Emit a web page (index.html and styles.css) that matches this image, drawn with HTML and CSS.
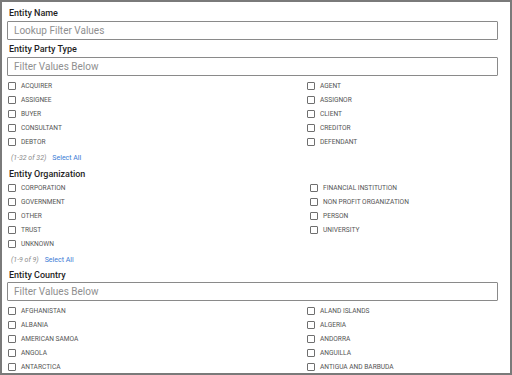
FILE: index.html
```html
<!DOCTYPE html>
<html>
<head>
<meta charset="utf-8">
<link rel="stylesheet" href="styles.css">
</head>
<body>
<div class="panel">
  <div class="label first">Entity Name</div>
  <div class="input">Lookup Filter Values</div>

  <div class="label">Entity Party Type</div>
  <div class="input">Filter Values Below</div>
  <div class="grid grid-a">
    <label class="opt"><span class="box"></span>ACQUIRER</label>
    <label class="opt"><span class="box"></span>AGENT</label>
    <label class="opt"><span class="box"></span>ASSIGNEE</label>
    <label class="opt"><span class="box"></span>ASSIGNOR</label>
    <label class="opt"><span class="box"></span>BUYER</label>
    <label class="opt"><span class="box"></span>CLIENT</label>
    <label class="opt"><span class="box"></span>CONSULTANT</label>
    <label class="opt"><span class="box"></span>CREDITOR</label>
    <label class="opt"><span class="box"></span>DEBTOR</label>
    <label class="opt"><span class="box"></span>DEFENDANT</label>
  </div>
  <div class="foot"><span class="count">(1-32 of 32)</span><span class="link">Select All</span></div>

  <div class="label">Entity Organization</div>
  <div class="grid grid-b">
    <div class="col">
      <label class="opt"><span class="box"></span>CORPORATION</label>
      <label class="opt"><span class="box"></span>GOVERNMENT</label>
      <label class="opt"><span class="box"></span>OTHER</label>
      <label class="opt"><span class="box"></span>TRUST</label>
      <label class="opt"><span class="box"></span>UNKNOWN</label>
    </div>
    <div class="col">
      <label class="opt"><span class="box"></span>FINANCIAL INSTITUTION</label>
      <label class="opt"><span class="box"></span>NON PROFIT ORGANIZATION</label>
      <label class="opt"><span class="box"></span>PERSON</label>
      <label class="opt"><span class="box"></span>UNIVERSITY</label>
    </div>
  </div>
  <div class="foot"><span class="count">(1-9 of 9)</span><span class="link">Select All</span></div>

  <div class="label tight">Entity Country</div>
  <div class="input">Filter Values Below</div>
  <div class="grid grid-a">
    <label class="opt"><span class="box"></span>AFGHANISTAN</label>
    <label class="opt"><span class="box"></span>ALAND ISLANDS</label>
    <label class="opt"><span class="box"></span>ALBANIA</label>
    <label class="opt"><span class="box"></span>ALGERIA</label>
    <label class="opt"><span class="box"></span>AMERICAN SAMOA</label>
    <label class="opt"><span class="box"></span>ANDORRA</label>
    <label class="opt"><span class="box"></span>ANGOLA</label>
    <label class="opt"><span class="box"></span>ANGUILLA</label>
    <label class="opt"><span class="box"></span>ANTARCTICA</label>
    <label class="opt"><span class="box"></span>ANTIGUA AND BARBUDA</label>
  </div>
</div>
</body>
</html>
```
FILE: styles.css
```css
html, body {
  margin: 0;
  padding: 0;
  background: #ffffff;
}
body {
  font-family: Roboto, "Liberation Sans", sans-serif;
  color: #222;
}
.panel {
  width: 512px;
  height: 375px;
  box-sizing: border-box;
  border: 2px solid #7a7a7a;
  padding: 4px 12px 0 5px;
  overflow: hidden;
}
.label {
  font-size: 9px;
  font-weight: 500;
  line-height: 14px;
  height: 14px;
  margin-top: 2px;
  padding-left: 2px;
  color: #1f1f1f;
}
.label.first {
  margin-top: 0;
}
.label.tight {
  margin-top: 1px;
}
.input {
  margin-top: 1px;
  height: 19px;
  box-sizing: border-box;
  border: 1px solid #8a8a8a;
  border-radius: 1px;
  font-size: 10px;
  line-height: 17px;
  padding-left: 6px;
  color: #8f8f8f;
}
.label.tight + .input {
  margin-top: 0;
}
.grid {
  display: grid;
  margin-top: 3px;
}
.grid-a {
  grid-template-columns: 299px 1fr;
}
.grid-b {
  grid-template-columns: 302px 1fr;
  margin-top: 0;
}
.col {
  display: flex;
  flex-direction: column;
}
.opt {
  display: flex;
  align-items: center;
  height: 14px;
  font-size: 6.6px;
  color: #555;
}
.box {
  width: 8px;
  height: 8px;
  box-sizing: border-box;
  border: 1px solid #6f6f6f;
  border-radius: 1px;
  margin-left: 1px;
  margin-right: 5px;
  flex: none;
}
.foot {
  margin-top: 2px;
  height: 14px;
  line-height: 14px;
  font-size: 7px;
  padding-left: 4px;
}
.count {
  font-style: italic;
  color: #8a8a8a;
  margin-right: 6px;
}
.link {
  color: #3a7bd5;
}
```
